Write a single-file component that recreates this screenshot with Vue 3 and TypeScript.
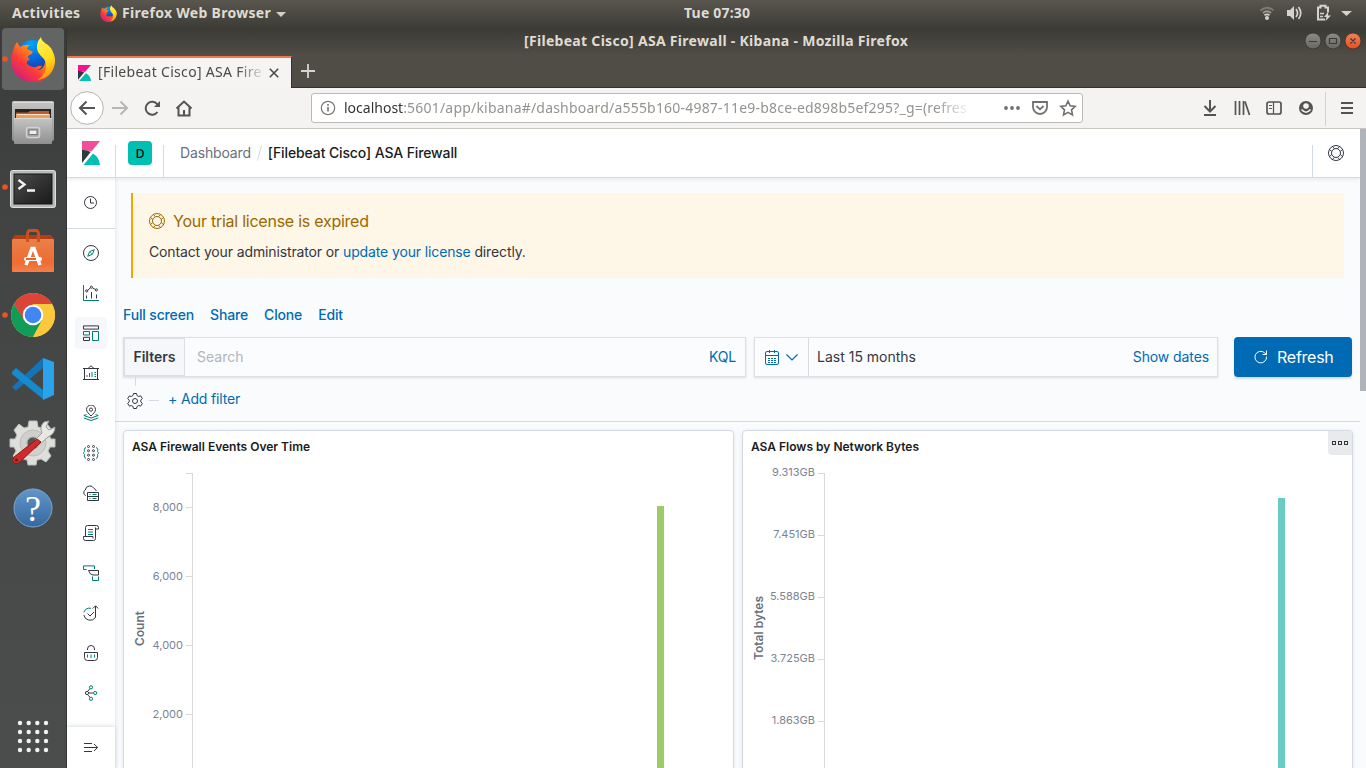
<script setup lang="ts">
interface Tick { y: number; label: string }
interface Chart {
  title: string; axisTitle: string; left: number; axisX: number; titleX: number; titleY: number; labelDrop: number
  ticks: Tick[]; barX: number; barY: number; color: string; menu: boolean
}

const charts: Chart[] = [
  {
    title: 'ASA Firewall Events Over Time', axisTitle: 'Count', left: 124, axisX: 192, titleX: 144, titleY: 628.5, labelDrop: 4,
    ticks: [{ y: 473, label: '' }, { y: 507, label: '8,000' }, { y: 576, label: '6,000' }, { y: 645, label: '4,000' }, { y: 714, label: '2,000' }],
    barX: 657, barY: 506, color: '#9ecb66', menu: false,
  },
  {
    title: 'ASA Flows by Network Bytes', axisTitle: 'Total bytes', left: 743, axisX: 824, titleX: 763, titleY: 628, labelDrop: 3,
    ticks: [{ y: 473, label: '9.313GB' }, { y: 535, label: '7.451GB' }, { y: 597, label: '5.588GB' }, { y: 659, label: '3.725GB' }, { y: 721, label: '1.863GB' }],
    barX: 1278, barY: 498, color: '#68ccc3', menu: true,
  },
]

const actions: string[] = ['Full screen', 'Share', 'Clone', 'Edit']

interface NavIcon { name: string; dark: string; teal: string; active?: boolean }
const navIcons: NavIcon[] = [
  { name: 'discover', dark: 'M8 .5a7.5 7.5 0 1 1 0 15a7.5 7.5 0 0 1 0-15z', teal: 'M11.3 4.6L9.4 9.3L4.7 11.3L6.6 6.7zM7.4 7.4L8.6 8.6' },
  { name: 'visualize', dark: 'M3.5 13.5v-3M8.5 13.5V7M13.5 13.5v-4M4.6 5.4L7.2 3M9.7 3L12.3 4.4M3.7 4.8a1.1 1.1 0 1 1 0 2.2a1.1 1.1 0 0 1 0-2.2zM8.4 1.1a1.1 1.1 0 1 1 0 2.2a1.1 1.1 0 0 1 0-2.2zM13.4 3.8a1.1 1.1 0 1 1 0 2.2a1.1 1.1 0 0 1 0-2.2z', teal: 'M.5 0v15.5H16' },
  { name: 'dashboard', dark: 'M.5 .9h15v3.200H.5zM.5 12.300h6v3.200h-6z', teal: 'M.5 6.500h6v3.500h-6zM9.500 6.500h6v9h-6z', active: true },
  { name: 'canvas', dark: 'M5 3.5L8 .8L11 3.5M0 3.5h16M0 14.5h16M1.5 3.5v11M14.5 3.5v11', teal: 'M4 12v-2M6.500 12v-4M9 12V7M11.500 7.500h1.500M11.500 9.500h1.500M11.500 11.500h1.500' },
  { name: 'maps', dark: 'M8 11C6 9 3.5 6.8 3.5 4.5a4.5 4.5 0 0 1 9 0C12.5 6.8 10 9 8 11zM8 3a1.6 1.6 0 1 1 0 3.200a1.6 1.6 0 0 1 0-3.200z', teal: 'M3.500 9.500L.8 10.500L8 13L15.200 10.500L12.500 9.500M.8 13L8 15.500L15.200 13' },
  { name: 'machine learning', dark: 'M5.500 .5a1 1 0 1 1 0 2a1 1 0 0 1 0-2zM10.500 .5a1 1 0 1 1 0 2a1 1 0 0 1 0-2zM5.500 4.700a1 1 0 1 1 0 2a1 1 0 0 1 0-2zM10.500 4.700a1 1 0 1 1 0 2a1 1 0 0 1 0-2zM5.500 9.200a1 1 0 1 1 0 2a1 1 0 0 1 0-2zM10.500 9.200a1 1 0 1 1 0 2a1 1 0 0 1 0-2zM5.500 13.500a1 1 0 1 1 0 2a1 1 0 0 1 0-2zM10.500 13.500a1 1 0 1 1 0 2a1 1 0 0 1 0-2z', teal: 'M3 2.500C1 3 1 5 1.500 6.500C.2 7.500.2 8.500 1.500 9.500C1 11.500 1.500 13 3 13.500M13 2.500C15 3 15 5 14.500 6.500C15.800 7.500 15.800 8.500 14.500 9.500C15 11.500 14.500 13 13 13.500' },
  { name: 'infrastructure', dark: 'M2.800 10.500A3 3 0 0 1 2.300 5A4.600 4.600 0 0 1 11 3.500A3.500 3.500 0 0 1 13.300 6M4.500 7.500h11v8h-11zM4.500 11.500h11', teal: 'M6.500 9.500h1M6.500 13.500h1M9.500 9.500h4M9.500 13.500h4' },
  { name: 'logs', dark: 'M2.500 11.500v-9q0-2 2-2h9q2 0 2 2v1.500h-3M12.500 2.500v11q0 2-2 2h-8q-2 0-2-2v-2h9.500v2', teal: 'M5 4.500h5M5 7h5M5 9.500h5' },
  { name: 'apm', dark: 'M5.500 5.500h10v4.500h-5.500q-3 0-4.500-4.500z', teal: 'M11.500 4V.9H.5v3.600h3M9.500 11.500v4h6v-4' },
  { name: 'uptime', dark: 'M4.500 8.500L7 11L11 7M.8 10A6.500 6.500 0 0 0 12.500 12.500V1M9.800 3.500L12.500 .8L15.200 3.500', teal: 'M.8 7.300A6.500 6.500 0 0 1 8 3.300' },
  { name: 'siem', dark: 'M1.500 7.500h13v5q0 3-3 3h-7q-3 0-3-3zM4.500 5V4a3.500 3.500 0 0 1 7 0v1', teal: 'M4.500 9.500v3M8 9.500v3.500M11.500 9.500v3' },
  { name: 'graph', dark: 'M4 6.400a1.600 1.600 0 1 1 0 3.200a1.600 1.600 0 0 1 0-3.200zM6 8h4M4.600 6.200L7 3.800M4.600 9.800L7 12.200', teal: 'M8 .700a1.600 1.600 0 1 1 0 3.200a1.600 1.600 0 0 1 0-3.200zM12.200 6.400a1.600 1.600 0 1 1 0 3.200a1.600 1.600 0 0 1 0-3.200zM8 12.200a1.600 1.600 0 1 1 0 3.200a1.600 1.600 0 0 1 0-3.200z' },
]

const ringPath = 'M8 .5a7.500 7.500 0 1 1 0 15a7.500 7.500 0 0 1 0-15zM8 3.500a4.500 4.500 0 1 1 0 9a4.500 4.500 0 0 1 0-9zM6.500 3.700L4.300 1.500M3.700 6.500L1.500 4.300M9.500 3.700L11.700 1.500M12.300 6.500L14.500 4.300M6.500 12.300L4.300 14.500M3.700 9.500L1.500 11.700M9.500 12.300L11.700 14.500M12.300 9.500L14.500 11.700'
const gridRows: number[] = [723, 732, 741, 750]
const gridCols: number[] = [20, 28.700, 37.300, 46]
</script>

<template>
  <div class="desktop">
    <svg class="defs" width="0" height="0">
      <defs>
        <linearGradient id="ffBody" x1="1" y1="0" x2="0.1" y2="1">
          <stop offset="0" stop-color="#ffe226" /><stop offset=".35" stop-color="#ff980e" />
          <stop offset=".65" stop-color="#fa3a3c" /><stop offset="1" stop-color="#c4168f" />
        </linearGradient>
        <radialGradient id="ffGlobe" cx=".45" cy=".1" r=".95">
          <stop offset="0" stop-color="#00a7f5" /><stop offset=".5" stop-color="#0a5ed8" /><stop offset="1" stop-color="#30267f" />
        </radialGradient>
        <linearGradient id="ffTail" x1=".3" y1="0" x2=".5" y2="1">
          <stop offset="0" stop-color="#fff44f" /><stop offset=".55" stop-color="#ffdc1e" /><stop offset="1" stop-color="#ff8f0d" />
        </linearGradient>
        <linearGradient id="metal" x1="0" y1="0" x2="0" y2="1">
          <stop offset="0" stop-color="#c4c4c4" /><stop offset="1" stop-color="#8f8f8f" />
        </linearGradient>
        <linearGradient id="screen" x1="0" y1="0" x2="1" y2="1">
          <stop offset="0" stop-color="#4c4c4c" /><stop offset="1" stop-color="#191919" />
        </linearGradient>
        <linearGradient id="bag" x1="0" y1="0" x2="0" y2="1">
          <stop offset="0" stop-color="#e9804a" /><stop offset=".7" stop-color="#ee6c31" /><stop offset="1" stop-color="#f47f49" />
        </linearGradient>
        <linearGradient id="help" x1="0" y1="0" x2="0" y2="1">
          <stop offset="0" stop-color="#6296ca" /><stop offset="1" stop-color="#34689f" />
        </linearGradient>
        <linearGradient id="winBtn" x1="0" y1="0" x2="0" y2="1">
          <stop offset="0" stop-color="#8d8b84" /><stop offset="1" stop-color="#686660" />
        </linearGradient>
        <linearGradient id="winClose" x1="0" y1="0" x2="0" y2="1">
          <stop offset="0" stop-color="#f4815a" /><stop offset="1" stop-color="#e2501f" />
        </linearGradient>
        <symbol id="firefox" viewBox="0 0 44 46">
          <circle cx="22" cy="22" r="18" fill="url(#ffGlobe)" />
          <path fill="url(#ffBody)" d="M6 6L9 11Q13 8 19 9Q16 11 16 13Q21 15 22 16Q21 18 17 20Q17 22 19 24Q15 24 16 28Q20 32 25 31Q28 29 31 30Q29 34 25 34Q32 35 34 27Q35 23 32 20L33 15L37 11Q44 18 44 25Q43 36 35 42Q28 47 19 46Q7 44 2 34Q-2 25 2 15Q3 10 6 6Z" />
          <path fill="url(#ffTail)" d="M30 1Q30 5 37 9Q43 14 44 24Q44 33 38 39Q33 43 27 44Q37 36 35 27Q34 23 30 20Q25 15 26 9Q27 4 30 1Z" />
        </symbol>
        <symbol id="kibana" viewBox="0 0 18 24">
          <path fill="#f04e98" d="M0 0H18L9.500 10.500Q5 8.500 0 9Z" />
          <path fill="#343741" d="M0 9Q5 8.500 8.700 11L0 22Z" />
          <path fill="#00bfb3" d="M1.500 24L11 12.500Q17.500 16.500 18 24Z" />
        </symbol>
      </defs>
    </svg>

    <header class="topbar">
      <span class="activities">Activities</span>
      <svg class="ff-small" width="17" height="17"><use href="#firefox" /></svg>
      <span class="app-name">Firefox Web Browser</span>
      <svg class="caret" width="10" height="5"><path d="M0 0h10L5 5z" fill="#d2cfc9" /></svg>
      <span class="clock">Tue 07:30</span>
      <svg class="tray" width="100" height="28" viewBox="1256 0 100 28">
        <g fill="none" stroke="#d6d3ce" stroke-width="1.800">
          <path stroke="#7e7b75" d="M1260.500 10.500Q1267 5 1273.500 10.500" />
          <path d="M1263 13Q1267 9.500 1271 13" stroke="#9d9a94" />
          <path d="M1264.500 15.200Q1267 13.500 1269.500 15.200" />
          <path d="M1296 9Q1299 13 1296 17M1298.500 7Q1303 13 1298.500 19" stroke-width="1.700" />
          <path d="M1325 19.500h-7v-12h2.500v-1.700h5v1.700h2.500v5" stroke-width="2" />
          <path d="M1320 13.500h4M1320 16.500h3" stroke-width="1.500" />
        </g>
        <g fill="#d6d3ce"><circle cx="1267" cy="18" r="2" /><path d="M1287 10h3l4-4v14l-4-4h-3zM1328 12l-4 5h2.500l-1 4l5.500-5.500h-2.800zM1341 11h11l-5.500 5z" /></g>
      </svg>
    </header>

    <aside class="dock">
      <span class="dock-hl" />
      <svg class="dock-icons" width="67" height="740" viewBox="0 28 67 740">
        <g fill="#e95420"><circle cx="5" cy="59" r="2.800" /><circle cx="5" cy="187" r="2.800" /><circle cx="5" cy="315" r="2.800" /></g>
        <use href="#firefox" x="11" y="36" width="44" height="46" />
        <!-- file cabinet -->
        <rect x="12" y="101" width="42" height="40" rx="2" fill="url(#metal)" />
        <path d="M12.500 102.500h41" stroke="#dadada" />
        <path d="M15 109h36v10H15z" fill="#252525" /><path d="M16 112.500h12l2-1.500h19v7H16z" fill="#c3592b" /><path d="M16 114h34v4H16z" fill="#eea154" /><path d="M17 114.500h32" stroke="#fde9d0" />
        <rect x="14" y="118" width="38" height="26" rx="1" fill="url(#metal)" /><path d="M14.500 118.500h37" stroke="#d8d8d8" />
        <rect x="26.500" y="127.500" width="13" height="10" rx="2" fill="#a4a4a4" stroke="#d3d3d3" stroke-width="1.500" /><rect x="29" y="130" width="8" height="4.500" fill="#eee" stroke="#777" />
        <!-- terminal -->
        <rect x="10.500" y="170.500" width="45" height="37" rx="2" fill="#b8b8b8" stroke="#dedede" />
        <rect x="14" y="174" width="38" height="30" fill="url(#screen)" stroke="#151515" />
        <path d="M18.500 180l6 4.500l-6 4.500M27 190.500h8" fill="none" stroke="#f3f3f3" stroke-width="2.300" />
        <!-- software bag -->
        <path d="M12 239l3-4h36l3 4z" fill="#b33e13" /><rect x="12" y="239" width="42" height="33" rx="1" fill="url(#bag)" />
        <path d="M27.500 242v-8q0-3.500 3-3.500h5q3 0 3 3.500v8" fill="none" stroke="#cf501d" stroke-width="2.800" />
        <path d="M26 265L32 248.500h2L40 265" fill="none" stroke="#fff" stroke-width="3.500" />
        <rect x="24" y="257" width="18" height="4" rx="2" fill="#fff" /><path d="M26 259h10" stroke="#e6652d" stroke-width="2" />
        <!-- chrome -->
        <circle cx="33" cy="315" r="22" fill="#fcca3f" />
        <path d="M14 304A22 22 0 0 1 52 304H33L24 321Z" fill="#db4437" />
        <path d="M14 304L24 320L33 325L42 320L33 337A22 22 0 0 1 14 304Z" fill="#109d58" />
        <path d="M33 304h19a22 22 0 0 1-19 33l9.500-16.500z" fill="#fcc93d" />
        <circle cx="33" cy="315" r="10.300" fill="#fff" /><circle cx="33" cy="315" r="8.300" fill="#4285f4" />
        <!-- code editor -->
        <path d="M12 387l4 3.500L43 368v-10z" fill="#1574b7" />
        <path d="M12 372l4-4L43 390v9L12 374z" fill="#168ace" /><path d="M43 358l11 4v33l-11 5z" fill="#2ba3ec" />
        <!-- settings -->
        <g stroke="#bdbdb9" fill="#dedfdb">
          <path d="M29 421h8l1 6 4 1 5-4 5 6-3 5 2 4h4v8h-5l-2 4 3 5-5 6-5-3-4 1-1 5h-8l-1-5-4-1-5 3-5-6 3-5-2-4h-4v-8h5l2-4-3-5 5-6 5 4 4-1z" />
          <circle cx="33" cy="443" r="13" fill="#d0d0cc" /><circle cx="33" cy="443" r="6" fill="#555" stroke="#aaa" />
        </g>
        <path d="M35 440L42 433Q39 427 44 422l5-1-3 6 3 3 6-3Q55 434 48 437L39 445Z" fill="#e7e7e4" stroke="#9d9d9a" />
        <path d="M37 439L14 457q-3 4 0 6t6-1L41 442Z" fill="#cf2b2a" stroke="#8f1919" /><circle cx="16.500" cy="460" r="1.600" fill="#621" />
        <!-- help -->
        <circle cx="33" cy="508" r="19" fill="url(#help)" stroke="#79a7d5" />
        <text x="33" y="521" text-anchor="middle" class="qmark">?</text>
        <g fill="#f2f2f2"><template v-for="y in gridRows" :key="y"><circle v-for="x in gridCols" :key="x" :cx="x" :cy="y" r="2.200" /></template></g>
      </svg>
    </aside>

    <section class="window">
      <div class="titlebar">
        <span class="wtitle">[Filebeat Cisco] ASA Firewall - Kibana - Mozilla Firefox</span>
        <svg class="wbtns" width="60" height="20" viewBox="1303 31 60 20">
          <g stroke="#34332f" stroke-width=".8"><circle cx="1313" cy="41" r="8" fill="url(#winBtn)" /><circle cx="1333" cy="41" r="8" fill="url(#winBtn)" /><circle cx="1353" cy="41" r="8" fill="url(#winClose)" /></g>
          <path d="M1309 41.500h8M1329.500 38.500h7v5h-7zM1350.500 38.500l5 5M1355.500 38.500l-5 5" fill="none" stroke="#3c3b37" stroke-width="1.200" />
        </svg>
      </div>
      <div class="tabs">
        <div class="tab">
          <svg width="13" height="16" viewBox="0 0 18 24" preserveAspectRatio="none">
            <path fill="#f2148c" d="M0 0H18L9.500 10.500Q5 8.500 0 9Z" /><path fill="#343741" d="M0 9Q5 8.500 8.700 11L0 22Z" /><path fill="#00bfb3" d="M1.500 24L11 12.500Q17.500 16.500 18 24Z" />
          </svg>
          <span class="tab-title">[Filebeat Cisco] ASA Fire</span>
          <svg class="x" width="10" height="10"><path d="M.8 .8l8.400 8.400M9.200 .8L.8 9.200" stroke="#4d4b47" stroke-width="1.600" /></svg>
        </div>
        <svg class="plus" width="14" height="14"><path d="M7 0v14M0 7h14" stroke="#d6d4d0" stroke-width="1.800" /></svg>
      </div>
      <div class="toolbar">
        <svg width="140" height="40" viewBox="67 88 140 40" fill="none" stroke="#555451" stroke-width="2">
          <circle cx="87" cy="108" r="16.300" fill="#fff" stroke="#b6b4b1" stroke-width="1" />
          <path d="M95 108H80M86.500 101.500L80 108l6.500 6.500" />
          <path stroke="#b8b6b4" d="M112 108h15M120.500 101.500L127 108l-6.500 6.500" />
          <path d="M157.500 112A6.500 6.500 0 1 1 157.500 104.500" /><path d="M160 101v6h-6z" fill="#555451" stroke="none" />
          <path d="M176.500 108.500L184 101.500L191.500 108.500M178.500 107v8.500h11V107M184 115v-5" />
        </svg>
        <div class="urlbar">
          <svg width="16" height="16" viewBox="0 0 16 16" fill="none" stroke="#7c7a78"><circle cx="8" cy="8" r="6.700" stroke-width="1.200" /><path d="M8 7v4.500M8 4v1.700" stroke-width="1.700" /></svg>
          <span class="url"><b>localhost</b>:5601/app/kibana#/dashboard/a555b160-4987-11e9-b8ce-ed898b5ef295?_g=(refres</span>
          <svg width="76" height="20" viewBox="1003 98 76 20" fill="none" stroke="#72706e" stroke-width="1.800">
            <g fill="#72706e" stroke="none"><circle cx="1006" cy="108" r="1.900" /><circle cx="1012" cy="108" r="1.900" /><circle cx="1018" cy="108" r="1.900" /></g>
            <path d="M1033 102h14v5a7 7 0 0 1-14 0zM1036.500 106l3.500 3.300l3.500-3.300" />
            <path stroke-width="1.600" d="M1068 101.200l2.200 4.600l5 .6l-3.700 3.500l1 5l-4.500-2.500l-4.500 2.500l1-5l-3.700-3.500l5-.6z" />
          </svg>
        </div>
        <svg class="tools" width="166" height="40" viewBox="1200 88 166 40" fill="none" stroke="#555451" stroke-width="2">
          <path d="M1210 100v11M1204.500 106l5.500 5.500l5.500-5.500M1204 115h12" />
          <path d="M1235.500 101v14M1239.500 101v14M1243.500 101v14M1245 101.500l4.500 13.500" stroke-width="1.700" />
          <rect x="1267" y="102" width="14" height="12" rx="2" stroke-width="1.700" /><path d="M1273.500 102v12M1269 105.500h3M1269 108.500h3" stroke-width="1.200" />
          <circle cx="1306" cy="108" r="7" fill="#555451" stroke="none" /><circle cx="1306" cy="106" r="2.800" fill="#f4f3f2" stroke="none" /><path d="M1301.500 109.500Q1306 115 1310.500 109.500" stroke="#f4f3f2" stroke-width="1.500" />
          <path d="M1325.500 92v34" stroke="#d3d1cf" stroke-width="1" /><path d="M1341 103h12M1341 108h12M1341 113h12" />
        </svg>
      </div>

      <div class="page">
        <header class="khead">
          <div class="logo"><svg width="19" height="24"><use href="#kibana" width="18" height="24" /></svg></div>
          <div class="space"><span>D</span></div>
          <nav class="crumbs"><a>Dashboard</a><i /><strong>[Filebeat Cisco] ASA Firewall</strong></nav>
          <div class="khelp"><svg class="ic" width="16" height="16" viewBox="0 0 16 16"><path :d="ringPath" /></svg></div>
        </header>
        <div class="kbody">
          <nav class="side">
            <div class="recent"><svg class="ic" width="13" height="13" viewBox="0 0 13 13"><path d="M6.500 .5a6 6 0 1 1 0 12a6 6 0 0 1 0-12zM6.500 2.500v4.500h3.500" /></svg></div>
            <ul>
              <li v-for="icon in navIcons" :key="icon.name" :class="{ active: icon.active }" :aria-label="icon.name">
                <svg class="ic" width="16" height="16" viewBox="0 0 16 16"><path :d="icon.dark" /><path class="teal" :d="icon.teal" /></svg>
              </li>
            </ul>
            <div class="expand"><svg class="ic" width="16" height="12" viewBox="0 0 16 12"><path d="M1 1.500h8M1 5.500h13.500M1 9.500h8M11 2l3.700 3.500L11 9" /></svg></div>
          </nav>
          <main>
            <div class="callout">
              <h2><svg class="ic" width="16" height="16" viewBox="0 0 16 16"><path :d="ringPath" /></svg>Your trial license is expired</h2>
              <p>Contact your administrator or <a>update your license</a> directly.</p>
            </div>
            <div class="actions"><a v-for="a in actions" :key="a">{{ a }}</a></div>
            <div class="query">
              <div class="search"><b>Filters</b><span>Search</span><a>KQL</a></div>
              <div class="dates">
                <div class="quick">
                  <svg width="14" height="15" viewBox="0 0 14 15" fill="none" stroke="#006bb4"><rect x=".5" y="1.500" width="13" height="13" rx="1.500" /><path d="M4.500 0v3M9.500 0v3M.5 5.500h13" /><path stroke-dasharray="2 1" d="M3 8.500h8M3 10.500h8M3 12.500h8" /></svg>
                  <svg width="12" height="7" viewBox="0 0 12 7" fill="none" stroke="#006bb4" stroke-width="1.200"><path d="M.5 .5L6 6L11.500 .5" /></svg>
                </div>
                <span>Last 15 months</span><a>Show dates</a>
              </div>
              <button class="refresh"><svg width="14" height="14" viewBox="0 0 14 14" fill="none" stroke="#fff"><path d="M12.500 6.500A5.800 5.800 0 1 1 10.500 2.700L12.500 4.500M12.500 .5v4h-4" /></svg>Refresh</button>
            </div>
            <div class="filters">
              <svg class="ic gear" width="16" height="24" viewBox="0 0 16 24">
                <path class="stem" d="M8.500 0v9" />
                <path d="M6.500 8.500h3l.5 2l1.700 1l2-.6l1.600 2.700l-1.500 1.500v1.800l1.500 1.500l-1.600 2.700l-2-.6l-1.700 1l-.5 2h-3l-.5-2l-1.700-1l-2 .6l-1.600-2.700l1.500-1.500v-1.800l-1.500-1.500l1.600-2.700l2 .6l1.700-1z" />
                <circle cx="8" cy="16" r="2.500" />
              </svg>
              <i /><a>+ Add filter</a>
            </div>
            <div class="grid">
              <article v-for="c in charts" :key="c.title" class="panel">
                <h3>{{ c.title }}</h3>
                <span v-if="c.menu" class="menu"><i /><i /><i /></span>
                <svg class="chart" width="609" height="305" :viewBox="`${c.left} 463 609 305`">
                  <text class="axis-title" text-anchor="middle" :transform="`translate(${c.titleX} ${c.titleY}) rotate(-90)`">{{ c.axisTitle }}</text>
                  <path :d="`M${c.axisX + .5} 473V768`" stroke="#d9d9d9" />
                  <g v-for="t in c.ticks" :key="t.y">
                    <path :d="`M${c.axisX - 6} ${t.y + .5}h6`" stroke="#d9d9d9" />
                    <text class="tick" text-anchor="end" :x="c.axisX - 9" :y="t.y + c.labelDrop">{{ t.label }}</text>
                  </g>
                  <rect :x="c.barX" :y="c.barY" width="7" height="270" :fill="c.color" />
                </svg>
              </article>
            </div>
          </main>
          <div class="scroll"><span /></div>
        </div>
      </div>
    </section>
  </div>
</template>

<style>
body { margin: 0; overflow: hidden; }
</style>

<style scoped>
* { box-sizing: border-box; }
.desktop { width: 1366px; height: 768px; overflow: hidden; display: grid; grid-template: 28px 740px / 67px 1299px; font-family: Inter, "Liberation Sans", sans-serif; font-size: 14px; color: #343741; }
.defs { position: absolute; }
svg { display: block; flex: none; }
a { color: #006bb4; }
.topbar { grid-column: 1 / 3; position: relative; display: flex; align-items: center; background: linear-gradient(#59564e, #3d3c37); color: #dfdbd2; font: bold 14px/26px "Noto Sans", sans-serif; padding-left: 12px; }
.topbar span { height: 28px; white-space: nowrap; }
.activities { width: 88px; letter-spacing: .35px; }
.ff-small { margin-right: 5px; margin-bottom: 2px; }
.app-name { width: 149px; letter-spacing: .3px; }
.caret { margin-left: 5px; }
.clock { position: absolute; left: 684px; top: 0; letter-spacing: .2px; }
.tray { margin-left: auto; margin-right: 10px; }
.dock { position: relative; background: linear-gradient(#3a3c3b, #434645 35%, #4b4d4d); box-shadow: inset -1px 0 #343635; }
.dock-hl { position: absolute; left: 2px; top: 0; width: 62px; height: 62px; border-radius: 4px; background: #636565; }
.dock-icons { position: relative; }
.qmark { font: 36px "Liberation Serif", serif; fill: #fff; }
.window { display: grid; grid-template-rows: 28px 32px 41px 1fr; min-width: 0; }
.titlebar { background: linear-gradient(#3b3a35, #504d46); display: flex; align-items: center; position: relative; }
.wtitle { font: bold 14px/26px "Noto Sans", sans-serif; letter-spacing: .3px; color: #dfdbd2; margin: -2px 0 0 457px; width: 390px; white-space: nowrap; }
.wbtns { margin-left: auto; margin-right: 3px; margin-top: -2px; }
.tabs { background: #504d46; display: flex; box-shadow: inset 0 -1px #33322e; }
.tab { width: 225px; height: 32px; background: #f5f4f3; border-top: 2px solid #f0774b; border-right: 1px solid #33322e; display: flex; align-items: center; padding-left: 11px; font: 14px/30px "Noto Sans", sans-serif; color: #4c4a46; }
.tab-title { margin: -2px 0 0 7px; width: 166px; letter-spacing: .3px; white-space: nowrap; mask-image: linear-gradient(90deg, #000 84%, transparent 101%); }
.x { margin-left: 5px; }
.plus { margin: 8px 0 0 9px; }
.toolbar { background: #f4f3f2; border-bottom: 1px solid #c9c5c1; display: flex; }
.urlbar { margin: 5px 0 0 104px; width: 772px; height: 30px; border: 1px solid #bcbab8; border-radius: 3px; background: #fff; display: flex; align-items: center; padding: 0 3px 0 8px; }
.url { margin-left: 8px; width: 629px; margin-right: 20px; font: 14px/28px "Noto Sans", sans-serif; letter-spacing: .2px; color: #96938f; white-space: nowrap; mask-image: linear-gradient(90deg, #000 94%, transparent 100%); }
.urlbar > svg:last-child { margin-left: auto; }
.url b { font-weight: 400; color: #343434; letter-spacing: 0; }
.tools { margin-left: auto; }
.page { height: 639px; overflow: hidden; position: relative; background: #fafbfd; display: grid; grid-template-rows: 49px 590px; }
.khead { position: relative; z-index: 3; width: 1293px; background: #fff; border-bottom: 1px solid #d3dae6; box-shadow: 0 2px 3px rgba(52, 55, 65, .08); display: flex; }
.logo { width: 49px; padding: 12px 0 0 15px; background: linear-gradient(#d3dae6, #d3dae6) right 16px / 1px 40px no-repeat; }
.space { width: 48px; padding: 12px 0 0 12px; background: linear-gradient(#d3dae6, #d3dae6) right 16px / 1px 40px no-repeat; }
.space span { display: block; width: 24px; height: 24px; border-radius: 4px; background: #00bfb3; color: #000; font: 500 12px/25px Inter; text-align: center; }
.crumbs { display: flex; align-items: center; margin: -1px 0 0 16px; }
.crumbs a { color: #69707d; letter-spacing: -.15px; }
.crumbs strong { font-weight: 500; color: #1a1c21; letter-spacing: -.12px; }
.crumbs i { width: 1px; height: 16px; background: #d3dae6; transform: rotate(15deg); margin: 0 8px; }
.khelp { margin-left: auto; width: 48px; padding: 16px 0 0 16px; background: linear-gradient(#d3dae6, #d3dae6) left 16px / 1px 40px no-repeat; }
.ic { fill: none; stroke: #343741; stroke-width: 1; }
.teal { stroke: #017d73; }
.kbody { display: grid; grid-template-columns: 48px 1245px 6px; min-height: 0; }
.side { background: #fff; position: relative; z-index: 2; box-shadow: 0 0 4px rgba(52, 70, 110, .18); display: flex; flex-direction: column; }
.recent { height: 51px; border-bottom: 1px solid #d3dae6; padding: 18px 0 0 17px; }
.side ul { list-style: none; margin: 8px 0 0; padding: 0; flex: 1; display: flex; flex-direction: column; align-items: center; gap: 8px; }
.side li { width: 32px; height: 32px; display: grid; place-items: center; border-radius: 4px; flex: none; }
.side li.active { background: #f5f7fa; }
.expand { height: 43px; flex: none; background: #fff; box-shadow: 0 -1px 4px rgba(52, 70, 110, .18); padding: 15px 0 0 16px; }
main { min-width: 0; display: flex; flex-direction: column; }
.callout { margin: 15px 16px 0; height: 85px; background: #fef6e6; border-left: 2px solid #f5a700; padding: 16px; }
.callout h2 { margin: 0; font: 400 16px/24px Inter; color: #9b6800; display: flex; align-items: center; gap: 8px; letter-spacing: -.25px; }
.callout .ic { stroke: #9b6800; }
.callout p { margin: 8px 0 0; line-height: 21px; font-size: 14px; letter-spacing: -.13px; }
.actions { display: flex; gap: 16px; margin: 26px 8px 0; line-height: 21px; font-weight: 500; letter-spacing: -.15px; }
.query { display: flex; margin: 12px 8px 0; height: 40px; line-height: 38px; }
.search, .dates { border: 1px solid #dee0e3; background: #fbfcfd; box-shadow: 0 1px 2px rgba(52, 55, 65, .15); display: flex; }
.search { width: 623px; }
.search b { width: 61px; font-weight: 600; letter-spacing: 0; background: #f5f7fa; border: 1px solid #dcdee2; text-align: center; line-height: 36px; }
.search span { margin-left: 12px; color: #b1b5bc; }
.search a { margin-left: auto; margin-right: 9px; letter-spacing: -.15px; }
.dates a { margin-left: auto; margin-right: 8px; letter-spacing: -.1px; }
.dates { margin-left: 8px; width: 464px; }
.quick { width: 54px; border-right: 1px solid #d8dbe0; display: flex; align-items: center; gap: 7px; padding-left: 10px; margin-right: 8px; }
.refresh { margin-left: 16px; width: 118px; border: 0; border-radius: 4px; background: #006bb4; color: #fff; font: 400 16px/40px Inter; display: flex; align-items: center; gap: 9px; padding: 0 0 0 20px; box-shadow: 0 2px 2px rgba(54, 97, 126, .2); letter-spacing: -.25px; }
.filters { height: 45px; border-bottom: 1px solid #d3dae6; display: flex; padding-left: 12px; line-height: 21px; }
.gear { overflow: visible; transform: translateY(8px); }
.stem { stroke: #d3dae6; transform: translateY(-8px); }
.filters i { width: 10px; height: 1px; background: #d3dae6; margin: 23px 9px 0 6px; }
.filters a { margin-top: 11px; letter-spacing: -.15px; }
.grid { display: flex; gap: 8px; padding: 8px 8px 0; }
.panel { position: relative; width: 611px; height: 340px; background: #fff; border: 1px solid #d3dae6; border-radius: 4px 4px 0 0; box-shadow: 0 1px 4px rgba(52, 70, 110, .12); display: flex; flex-direction: column; }
.panel h3 { margin: 0 8px; height: 32px; font: 600 12px/31px Inter; color: #1a1c21; }
.menu { position: absolute; right: 0; top: 0; width: 24px; height: 24px; border-radius: 0 4px 0 4px; background: #e9eaec; display: flex; align-items: center; justify-content: center; gap: 2px; }
.menu i { width: 4px; height: 4px; border: 1px solid #343741; }
.tick { font: 11px Inter; fill: #7b8494; }
.axis-title { font: 600 12px Inter; fill: #69707d; }
.scroll { position: relative; z-index: 4; margin-top: -49px; }
.scroll span { display: block; height: 262px; background: #b0b3ba; }
</style>
